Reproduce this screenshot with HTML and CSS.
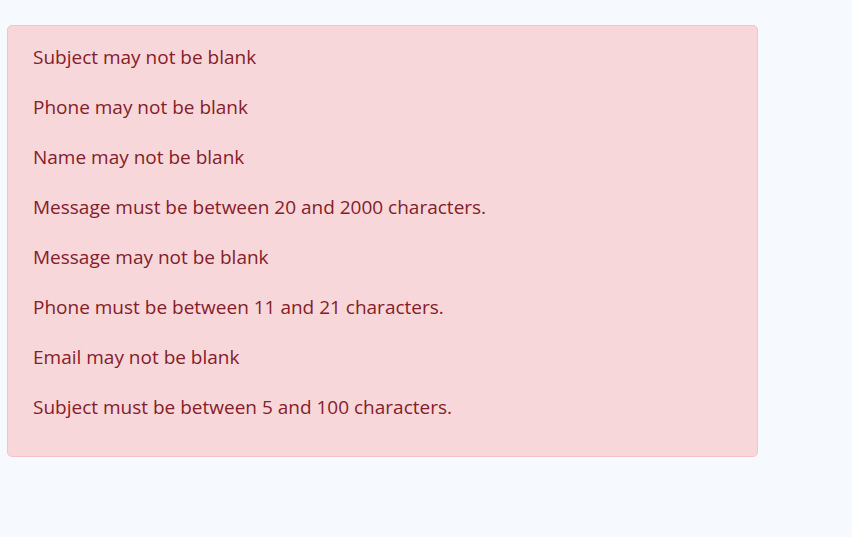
FILE: index.html
```html
<!DOCTYPE html>
<html>
<head>
<meta charset="utf-8">
<link rel="stylesheet" href="styles.css">
</head>
<body>
<div class="alert">
  <ul class="errors">
    <li>Subject may not be blank</li>
    <li>Phone may not be blank</li>
    <li>Name may not be blank</li>
    <li>Message must be between 20 and 2000 characters.</li>
    <li>Message may not be blank</li>
    <li>Phone must be between 11 and 21 characters.</li>
    <li>Email may not be blank</li>
    <li>Subject must be between 5 and 100 characters.</li>
  </ul>
</div>
</body>
</html>
```
FILE: styles.css
```css
html, body {
  margin: 0;
  padding: 0;
  background: #f6faff;
}
body {
  padding: 25px 94px 0 7px;
  font-family: "Open Sans", "Noto Sans", sans-serif;
}
.alert {
  background: #f8d7da;
  border: 1px solid #f5c2c7;
  border-radius: 5px;
  color: #842029;
  padding: 19px 16px 11px 25px;
}
.errors {
  list-style: none;
  margin: 0;
  padding: 0;
  display: flex;
  flex-direction: column;
  gap: 25px;
}
.errors li {
  font-size: 19px;
  line-height: 25px;
}
.errors li:last-child {
  margin-bottom: 25px;
}
```
